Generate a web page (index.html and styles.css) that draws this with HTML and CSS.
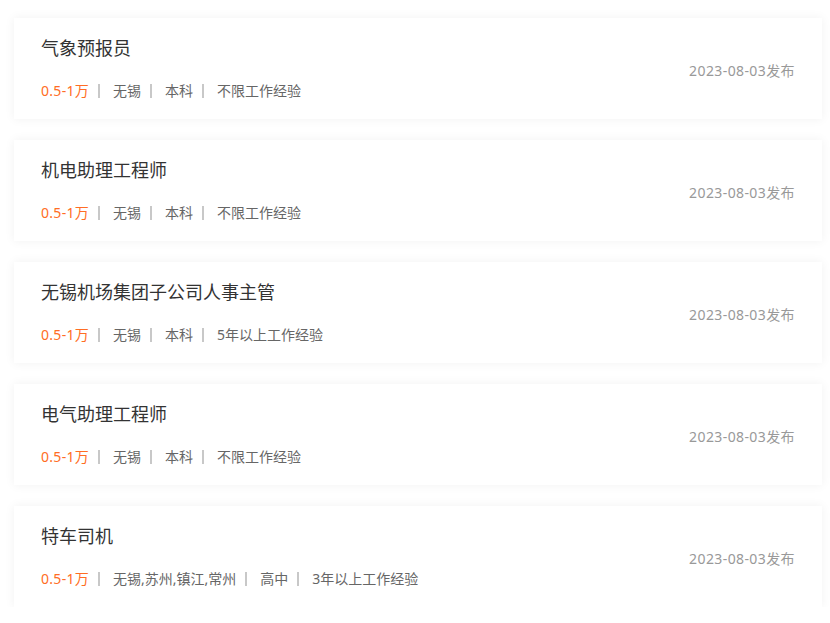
FILE: index.html
```html
<!DOCTYPE html>
<html lang="zh-CN">
<head>
<meta charset="utf-8">
<title>职位列表</title>
<link rel="stylesheet" href="styles.css">
</head>
<body>
<div class="list">
  <div class="card">
    <div class="info">
      <div class="title">气象预报员</div>
      <div class="meta"><span class="item salary">0.5-1万</span><span class="item">无锡</span><span class="item">本科</span><span class="item last">不限工作经验</span></div>
    </div>
    <div class="date">2023-08-03发布</div>
  </div>
  <div class="card">
    <div class="info">
      <div class="title">机电助理工程师</div>
      <div class="meta"><span class="item salary">0.5-1万</span><span class="item">无锡</span><span class="item">本科</span><span class="item last">不限工作经验</span></div>
    </div>
    <div class="date">2023-08-03发布</div>
  </div>
  <div class="card">
    <div class="info">
      <div class="title">无锡机场集团子公司人事主管</div>
      <div class="meta"><span class="item salary">0.5-1万</span><span class="item">无锡</span><span class="item">本科</span><span class="item last">5年以上工作经验</span></div>
    </div>
    <div class="date">2023-08-03发布</div>
  </div>
  <div class="card">
    <div class="info">
      <div class="title">电气助理工程师</div>
      <div class="meta"><span class="item salary">0.5-1万</span><span class="item">无锡</span><span class="item">本科</span><span class="item last">不限工作经验</span></div>
    </div>
    <div class="date">2023-08-03发布</div>
  </div>
  <div class="card">
    <div class="info">
      <div class="title">特车司机</div>
      <div class="meta"><span class="item salary">0.5-1万</span><span class="item">无锡,苏州,镇江,常州</span><span class="item">高中</span><span class="item last">3年以上工作经验</span></div>
    </div>
    <div class="date">2023-08-03发布</div>
  </div>
</div>
</body>
</html>
```
FILE: styles.css
```css
html, body {
  margin: 0;
  padding: 0;
  background: #fff;
}
body {
  font-family: "Noto Sans", "Noto Sans CJK SC", sans-serif;
}
.list {
  display: flex;
  flex-direction: column;
  gap: 21px;
  padding: 18px 8px 0 14px;
}
.card {
  height: 101px;
  box-sizing: border-box;
  background: #fff;
  box-shadow: 0 0 10px rgba(0, 0, 0, 0.06);
  display: flex;
  justify-content: space-between;
  align-items: center;
  padding: 0 27px 0 27px;
}
.info {
  display: flex;
  flex-direction: column;
  padding-bottom: 2px;
}
.title {
  font-size: 18px;
  line-height: 26px;
  color: #333;
}
.meta {
  margin-top: 20px;
  font-size: 14px;
  line-height: 20px;
  color: #666;
  display: flex;
  align-items: center;
}
.item {
  display: flex;
  align-items: center;
}
.item::after {
  content: "";
  display: block;
  width: 2px;
  height: 14px;
  background: #c8c8c8;
  margin: 0 13px 0 9px;
}
.item.last::after {
  display: none;
}
.salary {
  color: #ff6d24;
  letter-spacing: 0.3px;
}
.date {
  font-size: 14px;
  color: #999;
  margin-top: 3px;
  letter-spacing: 0.4px;
}
```
